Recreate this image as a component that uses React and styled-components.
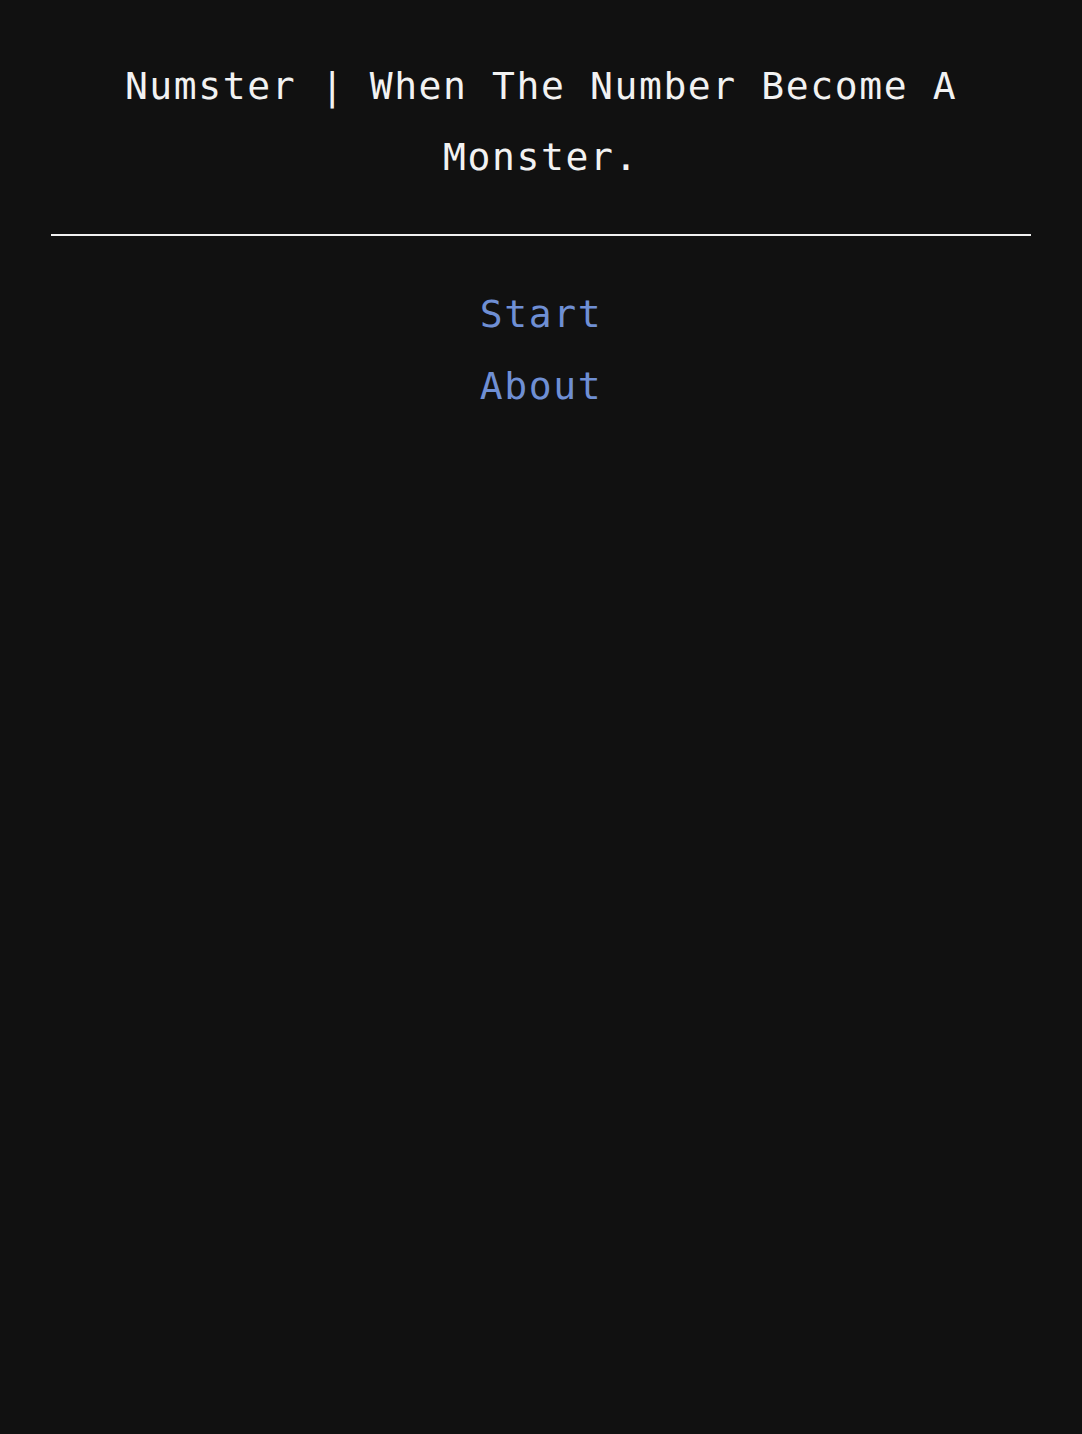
import React from "react";
import styled, { createGlobalStyle } from "styled-components";

const GlobalStyle = createGlobalStyle`
  html, body {
    margin: 0;
    padding: 0;
    background: #111111;
  }
  body {
    font-family: "DejaVu Sans Mono", "Liberation Mono", monospace;
    color: #f2f2f2;
  }
`;

const Page = styled.div`
  min-height: 1434px;
  box-sizing: border-box;
  padding: 51px 51px 0;
  background: #111111;
`;

const Title = styled.h1`
  margin: 0;
  font-size: 38px;
  font-weight: normal;
  line-height: 71px;
  letter-spacing: 1.6px;
  text-align: center;
  color: #f2f2f2;
`;

const Rule = styled.hr`
  margin: 41px 0 42px;
  border: none;
  height: 2px;
  background: #f2f2f2;
`;

const Menu = styled.nav`
  display: flex;
  flex-direction: column;
  align-items: center;
`;

const MenuLink = styled.a`
  font-size: 38px;
  line-height: 72px;
  letter-spacing: 1.6px;
  color: #6f8fd4;
  text-decoration: none;
  cursor: pointer;
`;

export default function App() {
  return (
    <>
      <GlobalStyle />
      <Page>
        <Title>Numster | When The Number Become A Monster.</Title>
        <Rule />
        <Menu>
          <MenuLink href="#start">Start</MenuLink>
          <MenuLink href="#about">About</MenuLink>
        </Menu>
      </Page>
    </>
  );
}
